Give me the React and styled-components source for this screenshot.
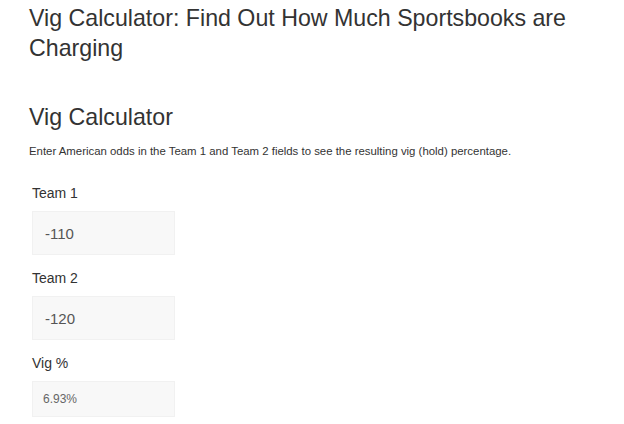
import React from "react";
import styled, { createGlobalStyle } from "styled-components";

const Global = createGlobalStyle`
  html, body { margin: 0; padding: 0; background: #fff; }
  body { font-family: "Liberation Sans", Arial, sans-serif; color: #333; }
  * { box-sizing: border-box; }
`;

const Page = styled.main`
  padding: 2.5px 20px 0 29px;
`;

const Title = styled.h1`
  margin: 0;
  font-size: 23.2px;
  line-height: 30px;
  font-weight: 400;
  color: #333;
`;

const Heading = styled.h2`
  margin: 39px 0 0;
  font-size: 23.2px;
  line-height: 30px;
  font-weight: 400;
  color: #333;
`;

const Intro = styled.p`
  margin: 12px 0 0;
  font-size: 11.4px;
  line-height: 15px;
  color: #333;
`;

const Form = styled.form`
  display: flex;
  flex-direction: column;
  padding-left: 3px;
  margin-top: 11.5px;
`;

const Label = styled.label`
  display: block;
  margin: 13px 0 8px;
  font-size: 14px;
  line-height: 20px;
  color: #333;
`;

const Field = styled.input`
  display: block;
  width: 143px;
  height: ${(p) => (p.$small ? 36 : 44)}px;
  margin: 0;
  padding: 0 0 0 ${(p) => (p.$small ? 10 : 12)}px;
  border: 1px solid #f1f1f1;
  border-radius: 0;
  background: #f8f8f8;
  font-family: "Liberation Sans", Arial, sans-serif;
  font-size: ${(p) => (p.$small ? 12 : 15)}px;
  color: ${(p) => (p.$small ? "#666" : "#555")};
  outline: none;
`;

const fields = [
  { id: "team1", label: "Team 1", value: "-110" },
  { id: "team2", label: "Team 2", value: "-120" },
  { id: "vig", label: "Vig %", value: "6.93%", small: true },
];

export default function App() {
  return (
    <>
      <Global />
      <Page>
        <Title>Vig Calculator: Find Out How Much Sportsbooks are Charging</Title>
        <Heading>Vig Calculator</Heading>
        <Intro>
          Enter American odds in the Team 1 and Team 2 fields to see the resulting vig (hold) percentage.
        </Intro>
        <Form onSubmit={(e) => e.preventDefault()}>
          {fields.map((f) => (
            <React.Fragment key={f.id}>
              <Label htmlFor={f.id}>{f.label}</Label>
              <Field id={f.id} defaultValue={f.value} readOnly $small={f.small} />
            </React.Fragment>
          ))}
        </Form>
      </Page>
    </>
  );
}
